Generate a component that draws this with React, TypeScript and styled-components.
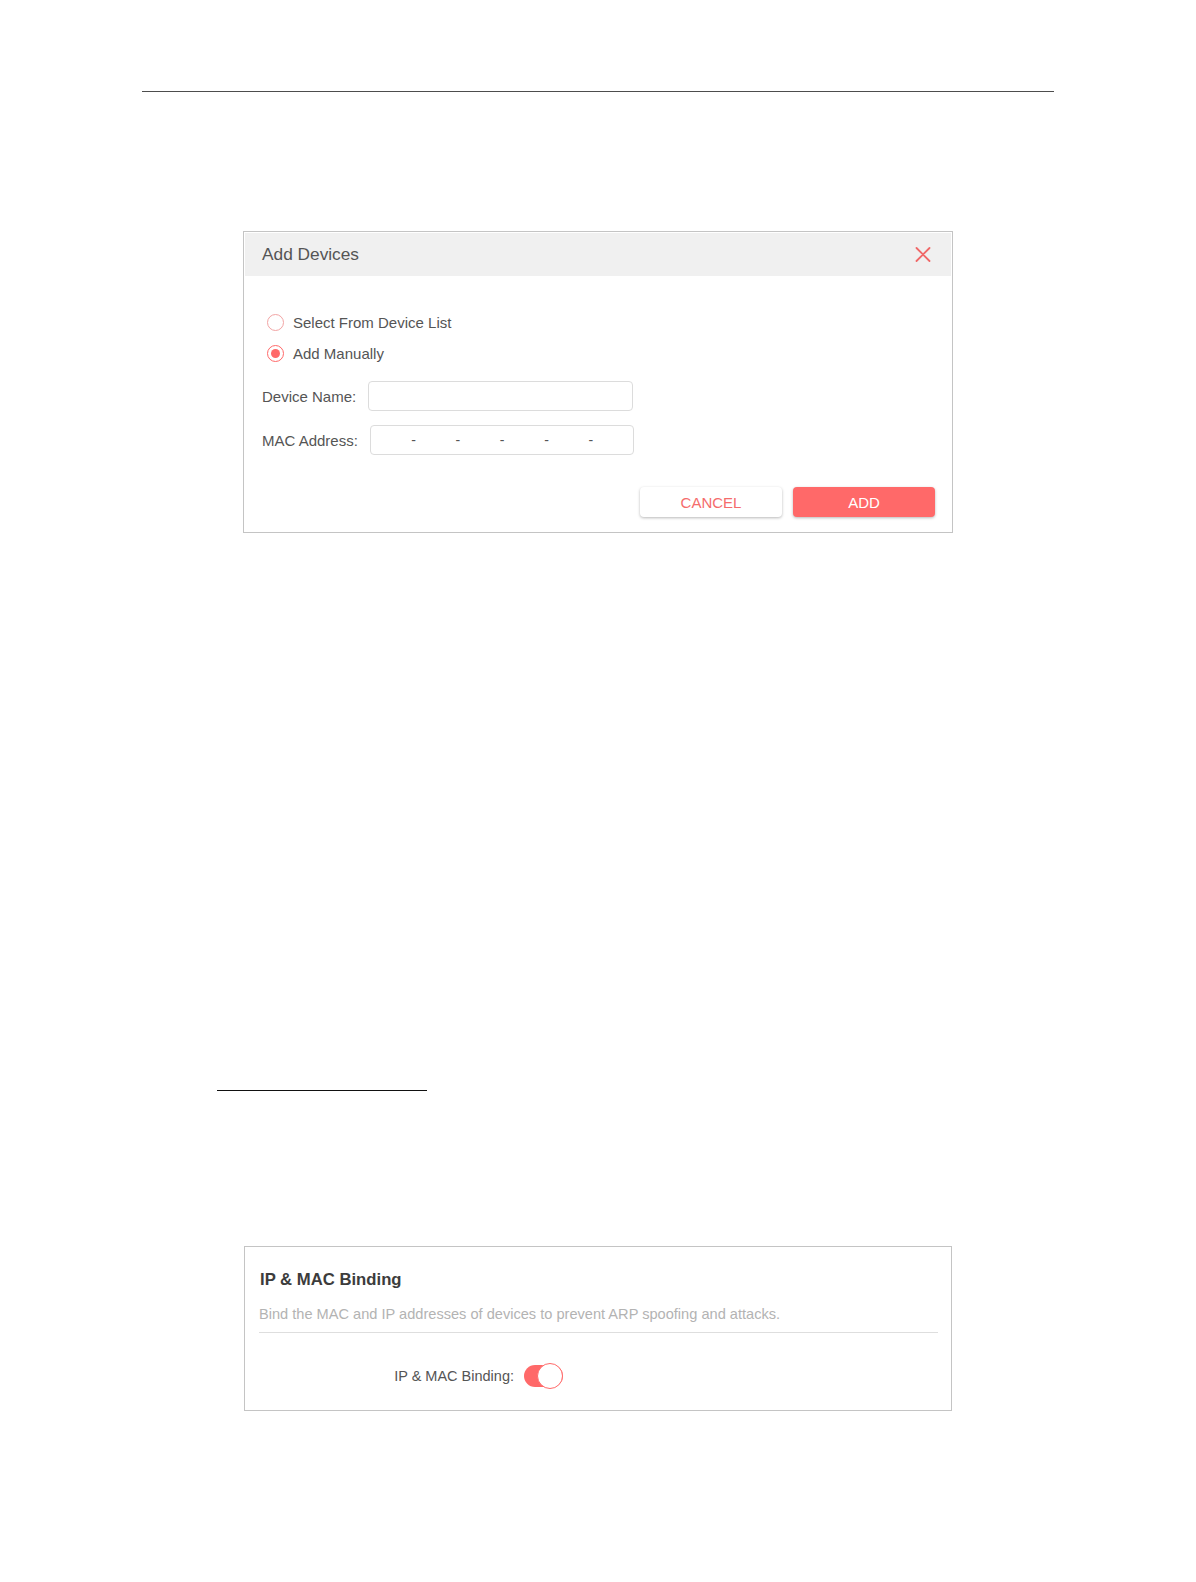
import React from "react";
import styled, { createGlobalStyle } from "styled-components";

const Global = createGlobalStyle`
  html, body { margin: 0; padding: 0; background: #ffffff; }
  body { font-family: "Liberation Sans", Arial, sans-serif; }
  * { box-sizing: border-box; }
`;

const RED = "#ff6969";

const Page = styled.div`
  width: 1196px;
  min-height: 1582px;
  padding-top: 91px;
  display: flex;
  flex-direction: column;
  align-items: flex-start;
`;

const TopRule = styled.hr`
  margin: 0 0 0 142px;
  width: 912px;
  height: 0;
  border: none;
  border-top: 1px solid #4d4d4d;
`;

const Dialog = styled.section`
  margin: 139px 0 0 243px;
  width: 710px;
  border: 1px solid #c4c4c4;
  padding: 1px;
  background: #fff;
`;

const DialogHeader = styled.header`
  height: 43px;
  background: #f0f0f0;
  display: flex;
  align-items: center;
  justify-content: space-between;
  padding: 0 20px 1px 17px;
`;

const DialogTitle = styled.h2`
  margin: 0;
  font-size: 17.3px;
  font-weight: normal;
  color: #555;
`;

const CloseButton = styled.button`
  border: none;
  background: none;
  padding: 0;
  width: 16px;
  height: 16px;
  display: flex;
  align-items: center;
  justify-content: center;
  cursor: pointer;
`;

const DialogBody = styled.div`
  padding: 36px 16px 14px 17px;
  display: flex;
  flex-direction: column;
`;

const RadioGroup = styled.div`
  display: flex;
  flex-direction: column;
  gap: 11px;
  padding-left: 5px;
`;

const RadioRow = styled.label`
  display: flex;
  align-items: center;
  gap: 9px;
  height: 20px;
  font-size: 15px;
  color: #555;
`;

const RadioCircle = styled.span<{ $checked?: boolean }>`
  width: 17px;
  height: 17px;
  border-radius: 50%;
  border: 1.5px solid ${(p) => (p.$checked ? RED : "#f2a4a4")};
  display: flex;
  align-items: center;
  justify-content: center;
  &::after {
    content: "";
    width: 9px;
    height: 9px;
    border-radius: 50%;
    background: ${(p) => (p.$checked ? RED : "transparent")};
  }
`;

const Fields = styled.div`
  margin-top: 18px;
  display: flex;
  flex-direction: column;
  gap: 14px;
`;

const FieldRow = styled.div`
  display: flex;
  align-items: center;
  gap: 12px;
`;

const FieldLabel = styled.span`
  font-size: 15px;
  color: #555;
`;

const TextBox = styled.div<{ $width: number }>`
  width: ${(p) => p.$width}px;
  height: 30px;
  border: 1px solid #dcdcdc;
  border-radius: 4px;
  background: #fff;
  display: flex;
  align-items: center;
`;

const MacSegment = styled.span`
  flex: 1;
`;

const MacDash = styled.span`
  font-size: 14px;
  color: #555;
  width: 4px;
  text-align: center;
`;

const Actions = styled.div`
  margin-top: 32px;
  display: flex;
  justify-content: flex-end;
  gap: 11px;
`;

const ActionButton = styled.button<{ $primary?: boolean }>`
  width: 142px;
  height: 30px;
  border: none;
  border-radius: 4px;
  font-family: "Liberation Sans", Arial, sans-serif;
  font-size: 15px;
  cursor: pointer;
  background: ${(p) => (p.$primary ? RED : "#fff")};
  color: ${(p) => (p.$primary ? "#fff" : "#f56c6c")};
  box-shadow: 0 1px 3px rgba(0, 0, 0, 0.28);
`;

const ShortRule = styled.hr`
  margin: 557px 0 0 217px;
  width: 210px;
  height: 0;
  border: none;
  border-top: 1px solid #111;
`;

const Panel = styled.section`
  margin: 155px 0 0 244px;
  width: 708px;
  border: 1px solid #c4c4c4;
  padding: 24px 13px 23px 14px;
`;

const PanelTitle = styled.h3`
  margin: 0 0 0 1px;
  font-size: 16.7px;
  line-height: 18px;
  font-weight: bold;
  color: #3c3c3c;
`;

const PanelDesc = styled.p`
  margin: 17px 0 0;
  font-size: 14.6px;
  line-height: 17px;
  color: #b3b3b3;
  padding-bottom: 9px;
  border-bottom: 1px solid #dedede;
`;

const SettingRow = styled.div`
  margin-top: 32px;
  display: flex;
  align-items: center;
  gap: 10px;
`;

const SettingLabel = styled.span`
  width: 255px;
  text-align: right;
  font-size: 14.5px;
  color: #555;
`;

const Toggle = styled.span<{ $on?: boolean }>`
  width: 39px;
  height: 22px;
  border-radius: 11px;
  background: ${(p) => (p.$on ? RED : "#ccc")};
  display: flex;
  align-items: center;
  justify-content: ${(p) => (p.$on ? "flex-end" : "flex-start")};
  &::after {
    content: "";
    flex: none;
    width: 24px;
    height: 24px;
    border-radius: 50%;
    background: #fff;
    border: 1.5px solid ${RED};
  }
`;

export default function App() {
  return (
    <>
      <Global />
      <Page>
        <TopRule />
        <Dialog>
          <DialogHeader>
            <DialogTitle>Add Devices</DialogTitle>
            <CloseButton aria-label="close">
              <svg width="16" height="15" viewBox="0 0 16 15">
                <path d="M1.5 1 L14.5 14 M14.5 1 L1.5 14" stroke="#f06868" strokeWidth="1.8" strokeLinecap="round" />
              </svg>
            </CloseButton>
          </DialogHeader>
          <DialogBody>
            <RadioGroup>
              <RadioRow>
                <RadioCircle />
                Select From Device List
              </RadioRow>
              <RadioRow>
                <RadioCircle $checked />
                Add Manually
              </RadioRow>
            </RadioGroup>
            <Fields>
              <FieldRow>
                <FieldLabel>Device Name:</FieldLabel>
                <TextBox $width={265} />
              </FieldRow>
              <FieldRow>
                <FieldLabel>MAC Address:</FieldLabel>
                <TextBox $width={264}>
                  {[0, 1, 2, 3, 4, 5].map((i) => (
                    <React.Fragment key={i}>
                      {i > 0 && <MacDash>-</MacDash>}
                      <MacSegment />
                    </React.Fragment>
                  ))}
                </TextBox>
              </FieldRow>
            </Fields>
            <Actions>
              <ActionButton>CANCEL</ActionButton>
              <ActionButton $primary>ADD</ActionButton>
            </Actions>
          </DialogBody>
        </Dialog>
        <ShortRule />
        <Panel>
          <PanelTitle>IP &amp; MAC Binding</PanelTitle>
          <PanelDesc>Bind the MAC and IP addresses of devices to prevent ARP spoofing and attacks.</PanelDesc>
          <SettingRow>
            <SettingLabel>IP &amp; MAC Binding:</SettingLabel>
            <Toggle $on />
          </SettingRow>
        </Panel>
      </Page>
    </>
  );
}
